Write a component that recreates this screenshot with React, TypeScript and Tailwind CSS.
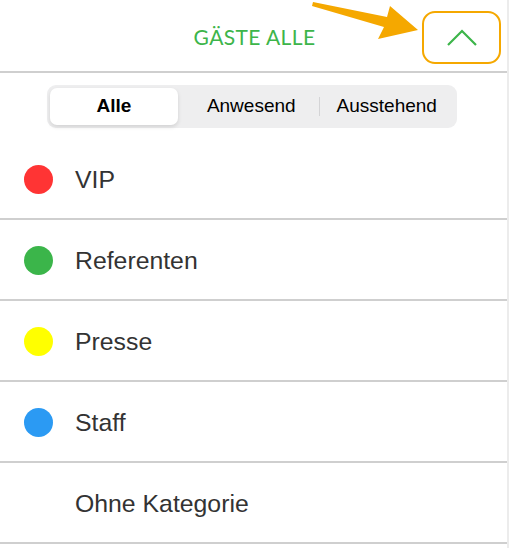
import React from "react";

const categories = [
  { name: "VIP", color: "bg-[#ff3434]" },
  { name: "Referenten", color: "bg-[#3bb54a]" },
  { name: "Presse", color: "bg-[#ffff00]" },
  { name: "Staff", color: "bg-[#2b9af3]" },
  { name: "Ohne Kategorie", color: "" },
];

const App = () => {
  return (
    <div className="relative w-[509px] h-[548px] bg-white border-r-2 border-[#ececec] overflow-hidden font-['Liberation_Sans',Arial,sans-serif]">
      {/* header */}
      <div className="h-[73px] flex items-center justify-center border-b-2 border-[#cfcfcf]">
        <span className="pt-[3px] pl-[2px] text-[21px] font-normal text-[#3db54a] font-['Lato','Liberation_Sans',sans-serif] tracking-[0.4px]">
          GÄSTE ALLE
        </span>
      </div>

      {/* segmented control */}
      <div className="pt-[12px] pb-[11px] pl-[47px]">
        <div className="w-[410px] h-[43px] rounded-[9px] bg-[#eeeeef] p-[3px] flex items-stretch text-[19px] text-black">
          <div className="w-[128px] rounded-[7px] bg-white shadow-[0_2px_4px_rgba(0,0,0,0.12)] flex items-center justify-center font-semibold">
            Alle
          </div>
          <div className="ml-[6px] flex-1 flex items-center justify-center">
            Anwesend
          </div>
          <div className="w-px my-[9px] bg-[#d4d4d6]" />
          <div className="flex-1 flex items-center justify-center">
            Ausstehend
          </div>
        </div>
      </div>

      {/* categories */}
      <ul>
        {categories.map((c) => (
          <li
            key={c.name}
            className="h-[81px] flex items-center border-b-2 border-[#cfcfcf] pt-[2px]"
          >
            <span className={`ml-[24px] w-[29px] h-[29px] rounded-full ${c.color}`} />
            <span className="ml-[22px] text-[24.8px] text-[#333333]">{c.name}</span>
          </li>
        ))}
      </ul>

      {/* annotation: highlighted button + arrow */}
      <div className="absolute left-[422px] top-[11px] w-[79px] h-[53px] rounded-[13px] border-[2.5px] border-[#f5a800] flex items-center justify-center">
        <svg width="32" height="18" viewBox="0 0 32 18">
          <polyline
            points="2,16 16,2 30,16"
            fill="none"
            stroke="#3db54a"
            strokeWidth="2.2"
          />
        </svg>
      </div>
      <svg
        className="absolute left-0 top-0"
        width="509"
        height="60"
        viewBox="0 0 509 60"
      >
        <polygon
          points="313,2 387,17 390,6 418,30 378,39 384,27 312,6"
          fill="#f5a800"
        />
      </svg>
    </div>
  );
};

export default App;
